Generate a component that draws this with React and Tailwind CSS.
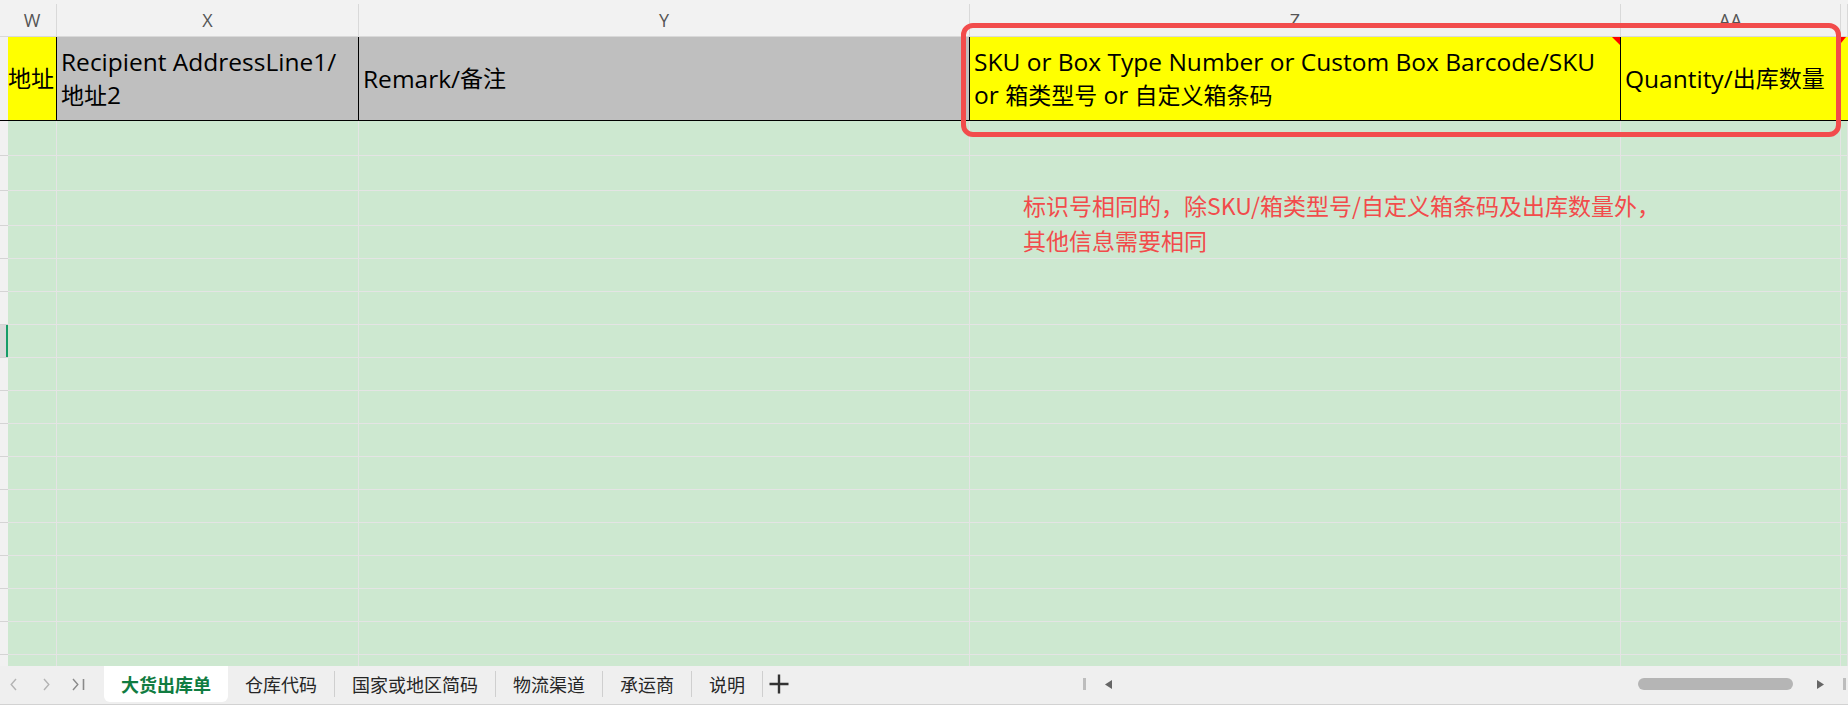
import React from 'react';

const cols = [
  { key: 'W', w: 'w-[49px]' },
  { key: 'X', w: 'w-[302px]' },
  { key: 'Y', w: 'w-[611px]' },
  { key: 'Z', w: 'w-[651px]' },
  { key: 'AA', w: 'w-[220px]' },
  { key: 'AB', w: 'w-[7px]' },
];

const rowHeights = [35, 35, 35, 33, 33, 33, 33, 33, 33, 33, 33, 33, 33, 33, 33, 33, 33];

const tabs = ['仓库代码', '国家或地区简码', '物流渠道', '承运商', '说明'];

const cjk = { fontFamily: '"Noto Sans CJK SC", "Noto Sans", sans-serif' };
const head = { fontFamily: '"Open Sans", "Noto Sans CJK SC", sans-serif' };

// CJK part of the header texts runs a little smaller than the latin part
const Zh = ({ children }) => <span className="text-[23px]">{children}</span>;

const Corner = () => (
  <div className="absolute top-0 right-0 w-[8px] h-[8px] bg-[#ff0000] [clip-path:polygon(0_0,100%_0,100%_100%)]" />
);

const App = () => {
  return (
    <div className="relative w-[1848px] h-[708px] overflow-hidden bg-white" style={cjk}>
      {/* column letters */}
      <div className="flex h-[37px] bg-[#f2f2f2] border-b border-[#d9d9d9]">
        <div className="w-[8px] shrink-0" />
        {cols.map((c) => (
          <div key={c.key} className={`${c.w} shrink-0 flex`}>
            <div
              className="flex-1 flex items-center justify-center pt-[5px] text-[18px] text-[#555] overflow-hidden"
              style={{ fontFamily: '"Open Sans", sans-serif' }}
            >
              {c.key !== 'AB' && c.key}
            </div>
            <div className="w-px h-[32px] self-end bg-[#d9d9d9]" />
          </div>
        ))}
      </div>

      {/* title row */}
      <div className="flex h-[84px] border-b border-black text-[24.5px] leading-[33px] text-black" style={head}>
        <div className="w-[8px] shrink-0 bg-[#f2f2f2]" />
        <div className="w-[49px] shrink-0 bg-[#ffff00] border-r border-black flex items-center overflow-hidden whitespace-nowrap text-[23px]">
          地址
        </div>
        <div className="w-[302px] shrink-0 bg-[#bfbfbf] border-r border-black flex items-center px-[4px] whitespace-nowrap">
          <div>
            Recipient AddressLine1/
            <br />
            <Zh>地址</Zh>2
          </div>
        </div>
        <div className="w-[611px] shrink-0 bg-[#bfbfbf] border-r border-black flex items-center px-[4px]">
          Remark/<Zh>备注</Zh>
        </div>
        <div className="relative w-[651px] shrink-0 bg-[#ffff00] border-r border-black flex items-center px-[4px] whitespace-nowrap">
          <div>
            SKU or Box Type Number or Custom Box Barcode/SKU
            <br />
            or <Zh>箱类型号</Zh> or <Zh>自定义箱条码</Zh>
          </div>
          <Corner />
        </div>
        <div className="w-[220px] shrink-0 bg-[#ffff00] border-r border-black flex items-center px-[4px] whitespace-nowrap overflow-hidden">
          Quantity/<Zh>出库数量</Zh>
        </div>
        <div className="relative w-[7px] shrink-0 bg-[#ffff00]">
          <div className="absolute top-0 left-0 w-[5px] h-[6px] bg-[#ff0000] [clip-path:polygon(0_0,100%_0,0_100%)]" />
        </div>
      </div>

      {/* data rows */}
      <div className="h-[545px] overflow-hidden">
        {rowHeights.map((h, i) => (
          <div key={i} className="flex" style={{ height: h }}>
            <div
              className={`relative w-[8px] shrink-0 border-b border-[#d4d4d4] ${
                i === 6 ? 'bg-[#dadada]' : 'bg-[#f1f1f1]'
              }`}
            >
              {i === 6 && <div className="absolute right-0 top-0 bottom-0 w-[2px] bg-[#169c68]" />}
            </div>
            {cols.map((c) => (
              <div
                key={c.key}
                className={`${c.w} shrink-0 bg-[#cde8d0] border-r border-b border-[#e4e4e4]`}
              />
            ))}
          </div>
        ))}
      </div>

      {/* sheet tabs + scrollbar */}
      <div className="flex items-start h-[39px] bg-[#efefef] border-b border-[#d2d2d2]">
        <div className="flex items-center h-[36px] pl-[10px]">
          <svg width="7" height="13" viewBox="0 0 7 13" className="block">
            <path d="M6 1 L1.2 6.5 L6 12" fill="none" stroke="#b3b3b3" strokeWidth="1.4" />
          </svg>
          <svg width="7" height="13" viewBox="0 0 7 13" className="block ml-[26px]">
            <path d="M1 1 L5.8 6.5 L1 12" fill="none" stroke="#b3b3b3" strokeWidth="1.4" />
          </svg>
          <svg width="13" height="13" viewBox="0 0 13 13" className="block ml-[22px]">
            <path d="M1 1 L5.8 6.5 L1 12" fill="none" stroke="#8a8a8a" strokeWidth="1.4" />
            <path d="M11.5 1 L11.5 12" fill="none" stroke="#8a8a8a" strokeWidth="1.6" />
          </svg>
        </div>
        <div className="flex items-center ml-[19px]">
          <div className="h-[36px] px-[17px] bg-white rounded-b-[6px] flex items-center text-[18px] font-bold text-[#107c41]">
            大货出库单
          </div>
          {tabs.map((t) => (
            <React.Fragment key={t}>
              <div className="h-[36px] px-[17px] flex items-center text-[18px] text-[#262626]">{t}</div>
              <div className="w-px h-[26px] bg-[#cfcfcf]" />
            </React.Fragment>
          ))}
          <svg width="20" height="20" viewBox="0 0 20 20" className="block ml-[6px]">
            <path d="M10 0.5 V19.5 M0.5 10 H19.5" stroke="#333" strokeWidth="2.4" />
          </svg>
        </div>
        <div className="flex items-center h-[36px] ml-[294px]">
          <div className="w-[3px] h-[12px] bg-[#bdbdbd]" />
          <svg width="7" height="9" viewBox="0 0 7 9" className="block ml-[19px]">
            <path d="M7 0 L0 4.5 L7 9 Z" fill="#666" />
          </svg>
          <div className="w-[155px] h-[12px] ml-[526px] rounded-full bg-[#b5b5b5]" />
          <svg width="7" height="9" viewBox="0 0 7 9" className="block ml-[24px]">
            <path d="M0 0 L7 4.5 L0 9 Z" fill="#666" />
          </svg>
          <div className="w-[3px] h-[12px] ml-[19px] bg-[#bdbdbd]" />
        </div>
      </div>

      {/* note over the grid */}
      <div className="absolute left-[1023px] top-[188px] text-[23px] leading-[35px] text-[#f24b4b] whitespace-nowrap">
        标识号相同的，除SKU/箱类型号/自定义箱条码及出库数量外，
        <br />
        其他信息需要相同
      </div>

      {/* highlight box */}
      <div className="absolute left-[961px] top-[23px] w-[880px] h-[114px] border-[5px] border-[#f24c4c] rounded-[12px]" />
    </div>
  );
};

export default App;
